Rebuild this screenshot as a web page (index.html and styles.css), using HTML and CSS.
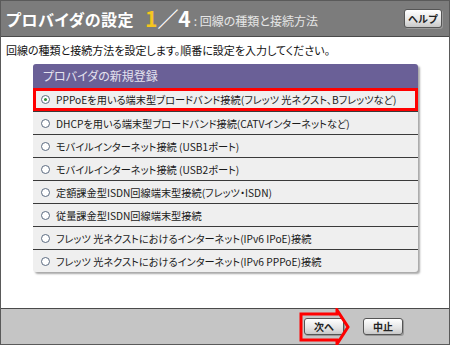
FILE: index.html
```html
<!DOCTYPE html>
<html lang="ja">
<head>
    <meta charset="UTF-8">
    <title>プロバイダの設定</title>
    <link rel="stylesheet" href="styles.css">
</head>
<body>
    <div class="window">
        <div class="titlebar">
            <span class="title">プロバイダの設定</span>
            <span class="step"><em>1</em>／4</span>
            <span class="subtitle">: 回線の種類と接続方法</span>
            <button class="btn help">ヘルプ</button>
        </div>
        <div class="content">
            <p class="lead">回線の種類と接続方法を設定します。順番に設定を入力してください。</p>
            <div class="panel">
                <div class="panel-head">プロバイダの新規登録</div>
                <ul class="options">
                    <li class="selected"><span class="radio on"></span>PPPoEを用いる端末型ブロードバンド接続(フレッツ 光ネクスト、Bフレッツなど)</li>
                    <li><span class="radio"></span>DHCPを用いる端末型ブロードバンド接続(CATVインターネットなど)</li>
                    <li><span class="radio"></span>モバイルインターネット接続 (USB1ポート)</li>
                    <li><span class="radio"></span>モバイルインターネット接続 (USB2ポート)</li>
                    <li><span class="radio"></span>定額課金型ISDN回線端末型接続(フレッツ・ISDN)</li>
                    <li><span class="radio"></span>従量課金型ISDN回線端末型接続</li>
                    <li><span class="radio"></span>フレッツ 光ネクストにおけるインターネット(IPv6 IPoE)接続</li>
                    <li><span class="radio"></span>フレッツ 光ネクストにおけるインターネット(IPv6 PPPoE)接続</li>
                </ul>
            </div>
        </div>
        <div class="footer">
            <div class="next-wrap">
                <svg class="arrow" width="52" height="38" viewBox="0 0 52 38">
                    <path d="M2 6 H38 V2 L49 19 L38 36 V32 H2 Z" fill="none" stroke="#ff0000" stroke-width="3" stroke-linejoin="miter"/>
                </svg>
                <button class="btn">次へ</button>
            </div>
            <button class="btn">中止</button>
        </div>
    </div>
</body>
</html>
```

FILE: styles.css
```css
body {
    margin: 0;
    padding: 0;
    background: #ffffff;
    font-family: "Noto Sans CJK JP", "DejaVu Sans", sans-serif;
    font-feature-settings: "palt";
}
.window {
    width: 450px;
    height: 345px;
    box-sizing: border-box;
    border: 1px solid #5a5a5a;
    display: flex;
    flex-direction: column;
}
.titlebar {
    height: 35px;
    background: #7c7c7c;
    border-bottom: 1px solid #4a4a4a;
    display: flex;
    align-items: center;
    padding: 0 7px 0 5px;
    color: #ffffff;
}
.title {
    font-size: 16px;
    font-weight: bold;
    letter-spacing: 0.5px;
}
.step {
    font-size: 21px;
    font-weight: bold;
    margin-left: 11px;
    line-height: 1;
}
.step em {
    font-style: normal;
    color: #f5c51e;
}
.subtitle {
    font-size: 12px;
    color: #e6e6e6;
    margin-left: 3px;
    margin-top: 3px;
}
.btn {
    font-family: inherit;
    font-size: 10px;
    font-weight: bold;
    color: #222222;
    background: linear-gradient(#ffffff, #e4e4e4 60%, #c8c8c8);
    border: 1px solid #555555;
    border-radius: 3px;
    padding: 0;
    height: 17px;
    width: 40px;
    line-height: 15px;
    box-shadow: 1px 1px 0 #999;
}
.help {
    margin-left: auto;
    height: 19px;
    width: 38px;
}
.content {
    flex: 1;
    padding: 6px 5px 0 5px;
}
.lead {
    margin: 0;
    font-size: 11px;
    color: #111111;
    line-height: 14px;
}
.panel {
    margin: 7px 0 0 27px;
    width: 385px;
    background: #efefef;
    border-radius: 3px;
    box-shadow: 2px 2px 2px #a8a8a8;
    overflow: hidden;
}
.panel-head {
    background: #6a6097;
    color: #e4e2ee;
    font-size: 12px;
    height: 24px;
    line-height: 24px;
    padding-left: 10px;
}
.options {
    list-style: none;
    margin: 0;
    padding: 0;
}
.options li {
    height: 23px;
    box-sizing: border-box;
    border-top: 1px solid #3a3a3a;
    display: flex;
    align-items: center;
    padding-left: 8px;
    font-size: 10.2px;
    color: #1a1a1a;
    white-space: nowrap;
}
.options li:first-child {
    border-top: none;
}
.options li.selected {
    border: 3px solid #ff0000;
    padding-left: 5px;
}
.radio {
    width: 7px;
    height: 7px;
    border: 1px solid #5b6a80;
    border-radius: 50%;
    background: #ffffff;
    margin-right: 6px;
    position: relative;
}
.radio.on::after {
    content: "";
    position: absolute;
    left: 2px;
    top: 2px;
    width: 3px;
    height: 3px;
    border-radius: 50%;
    background: #2f8a3a;
}
.footer {
    height: 35px;
    background: #c5c5c5;
    border-top: 1px solid #4a4a4a;
    display: flex;
    align-items: center;
    justify-content: flex-end;
    gap: 19px;
    padding-right: 46px;
}
.next-wrap {
    position: relative;
}
.next-wrap .btn {
    display: block;
}
.arrow {
    position: absolute;
    left: -5px;
    top: -10px;
}
```
